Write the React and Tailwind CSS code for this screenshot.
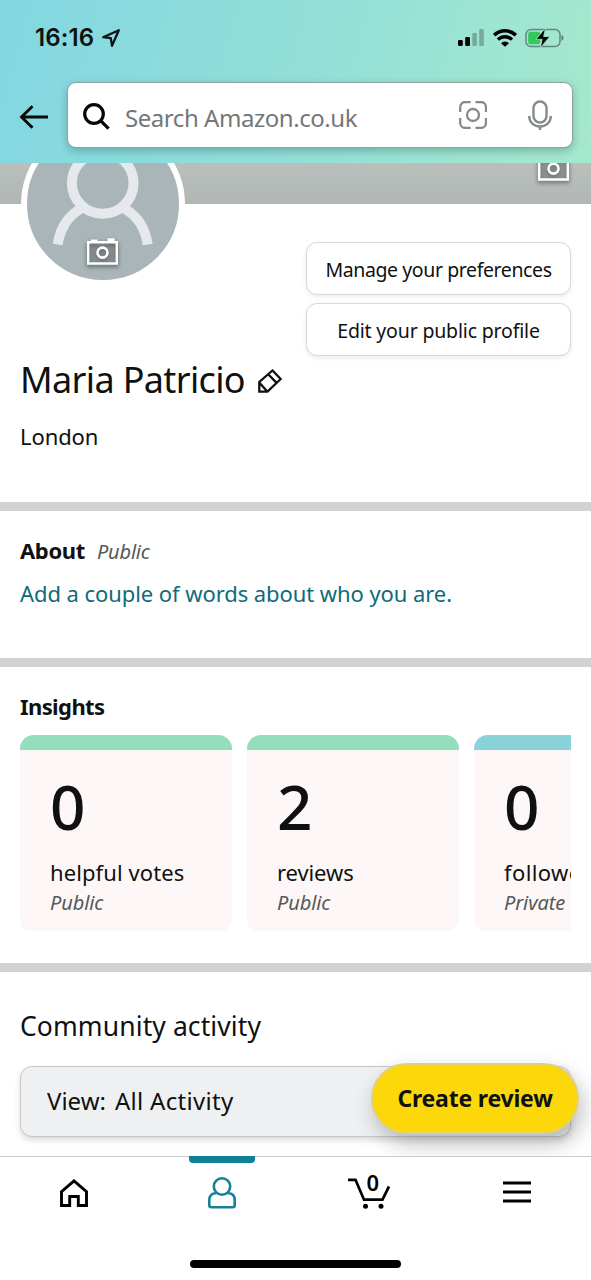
import { clsx } from "clsx";

const insights = [
  { value: "0", label: "helpful votes", visibility: "Public", bar: "bg-[#94debc]", spacing: "tracking-[0.1px]" },
  { value: "2", label: "reviews", visibility: "Public", bar: "bg-[#94debc]", spacing: "tracking-[-0.1px]" },
  { value: "0", label: "followers", visibility: "Private", bar: "bg-[#8ad2da]", spacing: "tracking-[0.4px]" },
];

const CameraIcon = ({ className }) => (
  <svg viewBox="0 0 31 27" className={clsx("h-[27px] w-[31px] drop-shadow-[0_2px_2px_rgba(0,0,0,0.5)]", className)}>
    <path d="M1.2 4.2h28.6v21.3H1.2z" fill="#6f7678" fillOpacity="0.3" stroke="#fff" strokeWidth="2.4" />
    <path d="M4 1.5h6.5V4H4zM20.5 0.3h7V4h-7z" fill="#fff" />
    <circle cx="15.5" cy="14.6" r="5" fill="none" stroke="#fff" strokeWidth="2.6" />
  </svg>
);

const StatusBar = () => (
  <div className="flex h-[82px] items-start justify-between pl-[35px] pr-[27px] pt-[24px]">
    <div className="flex items-center gap-2">
      <span className="font-['Inter',sans-serif] text-[24px] font-semibold leading-[28px] tracking-[0.1px]">16:16</span>
      <svg viewBox="0 0 18 18" className="h-[18px] w-[18px]" fill="none" stroke="#0a1214" strokeWidth="2.2" strokeLinejoin="round">
        <path d="M16.8 1.2 1.2 8.2l7.6 1 1.2 7.6z" />
      </svg>
    </div>
    <div className="flex h-[28px] items-center">
      <svg viewBox="0 0 26 17" className="mb-px h-[17px] w-[26px]">
        <rect x="0" y="11" width="4.8" height="6" rx="1.3" />
        <rect x="7.2" y="8" width="4.8" height="9" rx="1.3" />
        <rect x="14.3" y="4" width="4.6" height="13" rx="1.3" fillOpacity="0.25" />
        <rect x="21.2" y="0" width="4.6" height="17" rx="1.3" fillOpacity="0.25" />
      </svg>
      <svg viewBox="0 0 24 18" className="mb-px ml-[9px] h-[18px] w-[24px]">
        <path d="M1.2 6.2a15.5 15.5 0 0 1 21.6 0" fill="none" stroke="#000" strokeWidth="3.6" />
        <path d="M5 10.6a10 10 0 0 1 14 0" fill="none" stroke="#000" strokeWidth="3.4" />
        <path d="M12 17.8 8 14.2a5.8 5.8 0 0 1 8 0z" />
      </svg>
      <svg viewBox="0 0 39 20" className="mb-px ml-[8px] h-[20px] w-[39px]">
        <rect x="1" y="1.5" width="34" height="17" rx="5" fill="none" stroke="#000" strokeOpacity="0.4" strokeWidth="1.5" />
        <path d="M36.5 7v6c1.3-.4 2-1.6 2-3s-.7-2.6-2-3z" fillOpacity="0.45" />
        <rect x="3.2" y="3.8" width="12" height="12.4" rx="2.5" fill="#34c759" />
        <path d="m20.5 0-9.5 11.3h6.2L15.3 20 24.8 8.5h-6.2z" stroke="#a3e5d0" strokeWidth="0.8" />
      </svg>
    </div>
  </div>
);

const Header = () => (
  <header className="relative z-10 h-[163px] bg-linear-[105deg,#82d7e2_0%,#92dfd8_50%,#a6e8cd_100%]">
    <StatusBar />
    <div className="flex h-[66px] items-center pr-[18px]">
      <svg viewBox="0 0 30 24" className="ml-[19px] mt-[3px] h-[24px] w-[30px]" fill="none" stroke="#0a0a0a" strokeWidth="2.9">
        <path d="M29 12H2M13.5 1.2 2.5 12l11 10.8" />
      </svg>
      <div className="ml-[18px] flex h-[66px] flex-1 items-center rounded-[9px] border border-[#8fa3a3] bg-white shadow-[0_3px_8px_rgba(15,60,60,0.3)]">
        <svg viewBox="0 0 27 27" className="ml-[15px] mt-[2px] h-[27px] w-[27px]" fill="none" stroke="#050505" strokeWidth="3.2">
          <circle cx="11" cy="11" r="9.3" />
          <path d="m17.6 17.6 8 8" />
        </svg>
        <span className="ml-[15px] pt-[5px] text-[24px] leading-[30px] tracking-[-0.45px] text-[#747778]">Search Amazon.co.uk</span>
        <svg viewBox="0 0 28 28" className="ml-auto mr-[41px] h-[28px] w-[28px]" fill="none" stroke="#858b8b" strokeWidth="2.3">
          <path d="M1.2 11V6a5 5 0 0 1 5-5h5.5M16.5 1H22a5 5 0 0 1 5 5v5M27 17v5a5 5 0 0 1-5 5h-5.5M11.7 27H6.2a5 5 0 0 1-5-5v-5" />
          <circle cx="14" cy="14" r="6" />
        </svg>
        <svg viewBox="0 0 24 30" className="mr-[20px] h-[30px] w-[24px]" fill="none" stroke="#858b8b" strokeWidth="2.4">
          <rect x="5.5" y="1.5" width="13" height="21" rx="6.5" />
          <path d="M1.2 16c0 6 4.5 10.5 10.8 10.5S22.8 22 22.8 16M12 26.5V30" />
        </svg>
      </div>
    </div>
  </header>
);

const Avatar = () => (
  <div className="relative -mt-[82px] h-[164px] w-[164px] overflow-hidden rounded-full border-[6px] border-white bg-[#a9b5b8]">
    <svg viewBox="0 0 152 152" className="h-[152px] w-[152px]" fill="none" stroke="#e5e9ec" strokeWidth="10">
      <circle cx="75.7" cy="55" r="30.8" />
      <path d="M30.7 116.5C33 101 41 88 54 80.5M120.7 116.5C118.4 101 110.4 88 97.4 80.5" />
    </svg>
    <CameraIcon className="absolute left-[60px] top-[110px]" />
  </div>
);

const ProfileButton = ({ children, className }) => (
  <button className={clsx("flex h-[53px] w-[265px] items-center justify-center rounded-[11px] border-[1.5px] border-[#d5d9d9] bg-white pt-[2px] text-[19.5px] shadow-[0_2px_5px_rgba(0,0,0,0.08)]", className)}>
    {children}
  </button>
);

const Profile = () => (
  <section className="h-[339px]">
    <div className="h-[41px] bg-linear-to-b from-[#babfbc] to-[#b0b7b4]">
      <CameraIcon className="relative left-[537.5px] -top-[9px]" />
    </div>
    <div className="flex justify-between pl-[21px] pr-5">
      <Avatar />
      <div className="flex flex-col gap-2 pt-[38px]">
        <ProfileButton className="tracking-[-0.4px]">Manage your preferences</ProfileButton>
        <ProfileButton className="tracking-[-0.17px]">Edit your public profile</ProfileButton>
      </div>
    </div>
    <div className="mt-[2px] flex items-center gap-[13px] pl-5">
      <h1 className="text-[36px] leading-[44px] tracking-[-0.65px]">Maria Patricio</h1>
      <svg viewBox="0 0 24 24" className="mt-[2px] h-[24px] w-[24px]" fill="none" stroke="#0f1111" strokeWidth="2.3">
        <path d="M1.3 22.7V13L14.5 1.5 22.7 10 9.5 22.7zM10.2 5.3l8.4 8.6M1.3 13.5l8.2 9.2" />
      </svg>
    </div>
    <p className="mt-[19px] pl-5 text-[22px] leading-[30px] tracking-[-0.1px]">London</p>
  </section>
);

const Divider = () => <div className="h-[9px] bg-[#d2d2d2]" />;

const About = () => (
  <section className="h-[147px] px-5 pt-[24px]">
    <div className="flex items-baseline gap-3 leading-[30px]">
      <h2 className="text-[22px] font-bold tracking-[-0.35px]">About</h2>
      <span className="text-[20px] italic tracking-[-0.2px] text-[#565959]">Public</span>
    </div>
    <a className="mt-[11px] block text-[22px] leading-[30px] tracking-[-0.07px] text-[#0f6b7a]">Add a couple of words about who you are.</a>
  </section>
);

const Insights = () => (
  <section className="h-[296px] px-5 pt-[24px]">
    <h2 className="text-[22px] font-bold leading-[30px] tracking-[-0.6px]">Insights</h2>
    <div className="mt-[14px] flex gap-[15px] overflow-hidden">
      {insights.map((item) => (
        <div key={item.label} className="h-[196px] w-[212px] shrink-0 overflow-hidden rounded-t-[14px] rounded-b-[11px] bg-[#fdf7f7]">
          <div className={clsx("h-[15px]", item.bar)} />
          <div className="pl-[30px] pt-[21px]">
            <div className="text-[62px] font-medium leading-[70px]">{item.value}</div>
            <div className={clsx("mt-4 text-[22px] leading-[30px]", item.spacing)}>{item.label}</div>
            <div className="mt-px text-[20px] italic leading-[30px] tracking-[-0.1px] text-[#565959]">{item.visibility}</div>
          </div>
        </div>
      ))}
    </div>
  </section>
);

const Community = () => (
  <section className="relative h-[184px] overflow-hidden px-5 pt-[34px]">
    <h2 className="text-[26.5px] leading-[40px] tracking-[0.1px]">Community activity</h2>
    <div className="mt-[20px] flex h-[71px] items-center gap-[9px] rounded-[12px] border-[1.5px] border-[#c5c9c9] bg-[#eff0f2] pb-px pl-[26px] text-[24px] shadow-[0_3px_6px_rgba(0,0,0,0.15)]">
      <span>View:</span>
      <span className="tracking-[0.3px]">All Activity</span>
    </div>
    <button className="absolute left-[371px] top-[91px] flex h-[71px] w-[208px] items-center justify-center rounded-full border-2 border-[#dfd27a] bg-[#fcd70a] text-[23px] font-bold tracking-[-0.2px] shadow-[4px_10px_22px_rgba(0,0,0,0.25)]">
      Create review
    </button>
  </section>
);

const BottomNav = () => (
  <nav className="relative z-10 flex h-[124px] flex-col items-center justify-between border-t border-[#c9cccc] bg-white pb-[12px]">
    <div className="grid w-full grid-cols-4 justify-items-center">
      <div className="pt-[22px]">
        <svg viewBox="0 0 28 28" className="h-[28px] w-[28px]" fill="none" stroke="#000" strokeWidth="2.9">
          <path d="M1.5 26.5V12.7L14 1.9l12.5 10.8v13.8h-8.2v-9H9.7v9z" />
        </svg>
      </div>
      <div className="flex w-[66px] flex-col items-center">
        <div className="-mt-px h-[7px] w-[66px] rounded-b-[4px] bg-[#0e8196]" />
        <svg viewBox="0 0 28 32" className="mt-[14px] h-[32px] w-[28px]" fill="none" stroke="#168196" strokeWidth="2.6">
          <circle cx="14" cy="9.5" r="8.2" />
          <path d="M8 16.2C3.5 16.2 1.3 19 1.3 23v5.3c0 1.3.7 2 2 2h21.4c1.3 0 2-.7 2-2V23c0-4-2.2-6.8-6.7-6.8" />
        </svg>
      </div>
      <div className="relative pt-[20px]">
        <svg viewBox="0 0 42 33" className="h-[33px] w-[42px]" fill="none" stroke="#000" strokeWidth="2.7">
          <path d="M0 2.8h7.5l8.5 19.9h18.5L41 9.4" />
          <circle cx="17.5" cy="29.3" r="2.5" fill="#000" stroke="none" />
          <circle cx="33" cy="29.3" r="2.5" fill="#000" stroke="none" />
        </svg>
        <span className="absolute left-[18px] top-[12px] text-[22px] font-semibold leading-[26px] text-black">0</span>
      </div>
      <div className="pt-[24px]">
        <svg viewBox="0 0 28 22" className="h-[22px] w-[28px]" stroke="#000" strokeWidth="2.8">
          <path d="M0 2h28M0 11h28M0 20h28" />
        </svg>
      </div>
    </div>
    <div className="h-[8px] w-[211px] rounded-full bg-black" />
  </nav>
);

export default function App() {
  return (
    <div className="h-[1280px] w-[591px] overflow-hidden bg-white font-['Noto_Sans',sans-serif] text-[#0f1111]">
      <Header />
      <Profile />
      <Divider />
      <About />
      <Divider />
      <Insights />
      <Divider />
      <Community />
      <BottomNav />
    </div>
  );
}
